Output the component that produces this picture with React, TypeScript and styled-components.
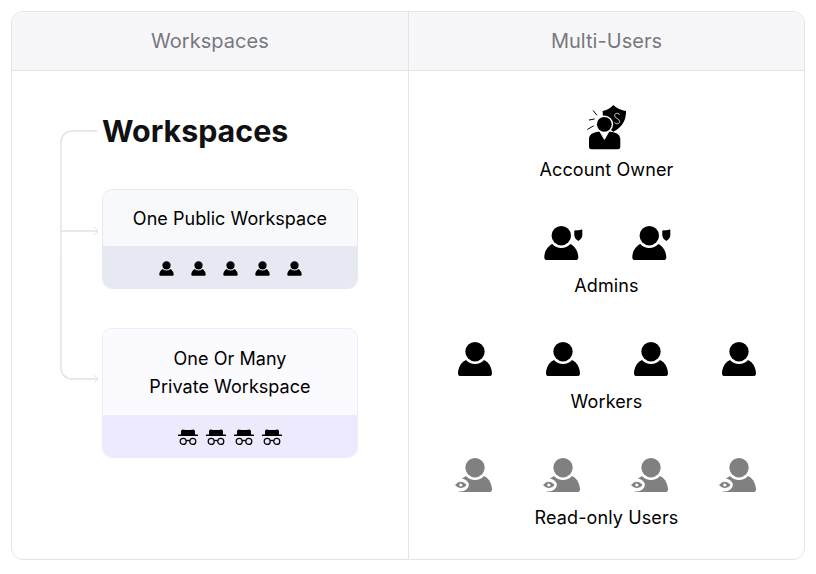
import React from 'react'
import styled, { createGlobalStyle } from 'styled-components'

const GlobalStyle = createGlobalStyle`
  html, body {
    margin: 0;
    background: #fff;
    font-family: Inter, 'Liberation Sans', sans-serif;
  }
`

const Page = styled.div`
  padding: 11px;
  width: 816px;
  height: 574px;
  box-sizing: border-box;
`

const Table = styled.div`
  display: grid;
  grid-template-columns: 397px 1fr;
  grid-template-rows: 59px 1fr;
  width: 794px;
  height: 549px;
  box-sizing: border-box;
  border: 1px solid #e4e4e7;
  border-radius: 12px;
  overflow: hidden;
`

const HeaderCell = styled.div<{ $last?: boolean }>`
  display: flex;
  align-items: center;
  justify-content: center;
  background: #f7f7f9;
  border-bottom: 1px solid #e4e4e7;
  border-right: ${(props) => (props.$last ? 'none' : '1px solid #e4e4e7')};
  color: #77777f;
  font-size: 20px;
  letter-spacing: 0.04px;
  line-height: 28px;
`

const WorkspacesPanel = styled.div`
  position: relative;
  display: flex;
  flex-direction: column;
  gap: 39px;
  padding: 42px 50px 0 90px;
  border-right: 1px solid #e4e4e7;
`

const Connector = styled.svg`
  position: absolute;
  left: 0;
  top: 0;
`

const Title = styled.h2`
  margin: 0 0 1px 0;
  color: #111113;
  font-size: 30.4px;
  line-height: 36px;
  font-weight: 700;
`

const Card = styled.div<{ $border: string }>`
  border: 1px solid ${(props) => props.$border};
  border-radius: 10px;
  overflow: hidden;
`

const CardText = styled.div<{ $bg: string; $height: number }>`
  display: flex;
  align-items: center;
  justify-content: center;
  box-sizing: border-box;
  height: ${(props) => props.$height}px;
  padding-top: 2px;
  background: ${(props) => props.$bg};
  color: #000;
  font-size: 18px;
  letter-spacing: 0.05px;
  line-height: 28px;
  text-align: center;
`

const CardBand = styled.div<{ $bg: string; $gap: number }>`
  display: flex;
  align-items: center;
  justify-content: center;
  gap: ${(props) => props.$gap}px;
  box-sizing: border-box;
  height: 42px;
  padding-top: 2px;
  background: ${(props) => props.$bg};
`

const UsersPanel = styled.div`
  display: flex;
  flex-direction: column;
  align-items: center;
  gap: 41px;
  padding-top: 36px;
`

const UserGroup = styled.div`
  display: flex;
  flex-direction: column;
  align-items: center;
  gap: 11px;
`

const IconRow = styled.div`
  display: flex;
  align-items: center;
  justify-content: center;
  gap: 48px;
  height: 40px;
`

const GroupLabel = styled.div`
  color: #000;
  font-size: 18px;
  letter-spacing: 0.12px;
  line-height: 24px;
`

const BODY =
  'M8 17.9A12 12 0 0 0 26 17.9C30.6 20 33.8 25 34 31.2Q34 34 31.4 34H2.6Q0 34 0 31.2C.2 25 3.4 20 8 17.9Z'

const PersonGlyph = ({ x = 0, y = 0 }: { x?: number; y?: number }) => (
  <g transform={`translate(${x} ${y})`}>
    <circle cx="17" cy="9.7" r="9.7" />
    <path d={BODY} />
  </g>
)

const PersonIcon = ({ size = 40 }: { size?: number }) => (
  <svg width={size} height={size} viewBox="0 0 40 40" fill="#000">
    <PersonGlyph x={3} y={3} />
  </svg>
)

const AdminIcon = () => (
  <svg width="40" height="40" viewBox="0 0 40 40" fill="#000">
    <PersonGlyph x={1.3} y={3} />
    <path d="M31.3 7.6Q35.3 7.4 39.3 6.4V12.2Q39 15.8 35.3 18Q31.6 15.8 31.3 12.2Z" />
  </svg>
)

const ReadOnlyIcon = () => (
  <svg width="40" height="40" viewBox="0 0 40 40" fill="#808080">
    <PersonGlyph x={3} y={3} />
    <ellipse cx="5.8" cy="30" rx="8" ry="6.4" fill="#fff" />
    <path d="M0 30Q5.8 23.4 11.7 30Q5.8 36.6 0 30Z" />
    <circle cx="5.8" cy="30" r="1.6" fill="#fff" />
  </svg>
)

const SpyIcon = () => (
  <svg width="20" height="16" viewBox="0 0 20 16">
    <path d="M3 6V2.2Q3.1 .4 4.8 .4Q7 .9 10 .9T15.2 .4Q16.9 .4 17 2.2V6Z" fill="#000" />
    <rect x="0" y="5.4" width="20" height="1.6" rx=".6" fill="#000" />
    <g fill="none" stroke="#000" strokeWidth="1.2">
      <circle cx="5.2" cy="12.4" r="3" />
      <circle cx="14.8" cy="12.4" r="3" />
      <path d="M8.2 12Q10 10.8 11.8 12" />
    </g>
  </svg>
)

const OwnerIcon = () => (
  <svg width="48" height="48" viewBox="0 0 48 48" fill="#000">
    <path d="M30.3 2C33.6 5.4 38.4 7.4 43 8Q43.4 22 30.3 28.8Q19 22 19.6 8C23.6 7.4 27.4 5.4 30.3 2Z" />
    <path
      d="M36.6 11.8C35.2 9.6 31.8 9.8 31.6 12.4C31.4 15.4 36.8 15.4 36.6 18.6C36.4 21.2 33 21.4 31.4 19.4"
      fill="none"
      stroke="#fff"
      strokeWidth=".8"
    />
    <circle cx="21.3" cy="21.3" r="8.8" fill="#fff" />
    <circle cx="21.3" cy="21.3" r="7.4" />
    <path d="M12.5 29.2C15 28.8 16.2 28.6 17 28.4L21.4 36L25.8 28.4C26.6 28.6 28 28.8 30.4 29.2C34.6 30 37.2 32.6 37.3 36V44Q37.3 46.3 35 46.3H8.4Q6 46.3 6 44V36C6.1 32.6 8.6 30 12.5 29.2Z" />
    <path d="M16.4 27.6L21.4 36.4L26.4 27.6" fill="none" stroke="#fff" strokeWidth="1" />
    <g stroke="#000" strokeWidth="1" strokeLinecap="round">
      <path d="M10.3 7.7L13.7 12" />
      <path d="M6.3 17L11.3 16" />
      <path d="M4.7 26.3L10.3 23" />
    </g>
  </svg>
)

const repeat = (count: number) => Array.from({ length: count }, (_, i) => i)

const App: React.FC = () => {
  return (
    <Page>
      <GlobalStyle />
      <Table>
        <HeaderCell>Workspaces</HeaderCell>
        <HeaderCell $last>Multi-Users</HeaderCell>
        <WorkspacesPanel>
          <Connector
            width="92"
            height="320"
            viewBox="0 0 92 320"
            fill="none"
            stroke="#e2e2e5"
            strokeWidth="1.4"
          >
            <path d="M85 60H60A11 11 0 0 0 49 71V297A11 11 0 0 0 60 308H85" />
            <path d="M49 160H85" />
            <path d="M82 156L86 160L82 164M82 304L86 308L82 312" strokeWidth="1" />
          </Connector>
          <Title>Workspaces</Title>
          <Card $border="#e6e9f2">
            <CardText $bg="#f8f9fb" $height={56}>
              One Public Workspace
            </CardText>
            <CardBand $bg="#e6e9f2" $gap={15}>
              {repeat(5).map((i) => (
                <PersonIcon key={i} size={17} />
              ))}
            </CardBand>
          </Card>
          <Card $border="#eeeafd">
            <CardText $bg="#fbfaff" $height={86}>
              One Or Many
              <br />
              Private Workspace
            </CardText>
            <CardBand $bg="#eeeafd" $gap={8}>
              {repeat(4).map((i) => (
                <SpyIcon key={i} />
              ))}
            </CardBand>
          </Card>
        </WorkspacesPanel>
        <UsersPanel>
          <UserGroup>
            <IconRow>
              <OwnerIcon />
            </IconRow>
            <GroupLabel>Account Owner</GroupLabel>
          </UserGroup>
          <UserGroup>
            <IconRow>
              {repeat(2).map((i) => (
                <AdminIcon key={i} />
              ))}
            </IconRow>
            <GroupLabel>Admins</GroupLabel>
          </UserGroup>
          <UserGroup>
            <IconRow>
              {repeat(4).map((i) => (
                <PersonIcon key={i} />
              ))}
            </IconRow>
            <GroupLabel>Workers</GroupLabel>
          </UserGroup>
          <UserGroup>
            <IconRow>
              {repeat(4).map((i) => (
                <ReadOnlyIcon key={i} />
              ))}
            </IconRow>
            <GroupLabel>Read-only Users</GroupLabel>
          </UserGroup>
        </UsersPanel>
      </Table>
    </Page>
  )
}

export default App
